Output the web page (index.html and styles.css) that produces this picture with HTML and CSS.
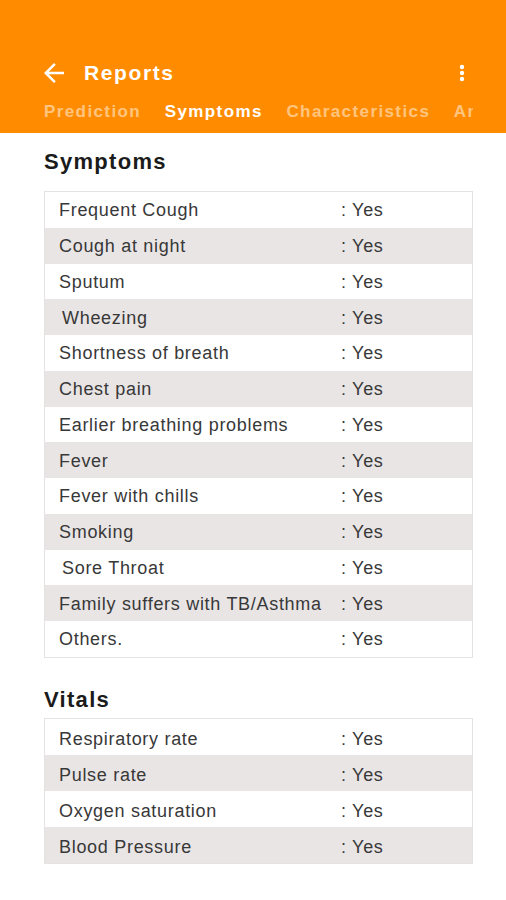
FILE: index.html
```html
<!DOCTYPE html>
<html lang="en">
<head>
<meta charset="utf-8">
<title>Reports</title>
<link rel="stylesheet" href="styles.css">
</head>
<body>
<header class="appbar">
  <div class="toolbar">
    <span class="back">
      <svg width="30" height="30" viewBox="0 0 24 24"><path fill="#fff" d="M20 11H7.83l5.59-5.59L12 4l-8 8 8 8 1.41-1.41L7.83 13H20v-2z"/></svg>
    </span>
    <span class="title">Reports</span>
    <span class="kebab">
      <svg width="6" height="18" viewBox="0 0 6 18"><circle cx="3" cy="3" r="2.2" fill="#fff"/><circle cx="3" cy="9" r="2.2" fill="#fff"/><circle cx="3" cy="15" r="2.2" fill="#fff"/></svg>
    </span>
  </div>
  <nav class="tabs">
    <span class="tab">Prediction</span>
    <span class="tab active">Symptoms</span>
    <span class="tab">Characteristics</span>
    <span class="tab">Analysis</span>
  </nav>
</header>

<main class="content">
  <h2 class="section-title first">Symptoms</h2>
  <div class="table symptoms">
    <div class="row"><span class="label">Frequent Cough</span><span class="value">: Yes</span></div>
    <div class="row alt"><span class="label">Cough at night</span><span class="value">: Yes</span></div>
    <div class="row"><span class="label">Sputum</span><span class="value">: Yes</span></div>
    <div class="row alt"><span class="label indent">Wheezing</span><span class="value">: Yes</span></div>
    <div class="row"><span class="label">Shortness of breath</span><span class="value">: Yes</span></div>
    <div class="row alt"><span class="label">Chest pain</span><span class="value">: Yes</span></div>
    <div class="row"><span class="label">Earlier breathing problems</span><span class="value">: Yes</span></div>
    <div class="row alt"><span class="label">Fever</span><span class="value">: Yes</span></div>
    <div class="row"><span class="label">Fever with chills</span><span class="value">: Yes</span></div>
    <div class="row alt"><span class="label">Smoking</span><span class="value">: Yes</span></div>
    <div class="row"><span class="label indent">Sore Throat</span><span class="value">: Yes</span></div>
    <div class="row alt"><span class="label">Family suffers with TB/Asthma</span><span class="value">: Yes</span></div>
    <div class="row"><span class="label">Others.</span><span class="value">: Yes</span></div>
  </div>

  <h2 class="section-title second">Vitals</h2>
  <div class="table vitals">
    <div class="row"><span class="label">Respiratory rate</span><span class="value">: Yes</span></div>
    <div class="row alt"><span class="label">Pulse rate</span><span class="value">: Yes</span></div>
    <div class="row"><span class="label">Oxygen saturation</span><span class="value">: Yes</span></div>
    <div class="row alt"><span class="label">Blood Pressure</span><span class="value">: Yes</span></div>
  </div>
</main>
</body>
</html>
```

FILE: styles.css
```css
* { box-sizing: border-box; }

body {
  margin: 0;
  background: #ffffff;
  font-family: "Liberation Sans", Arial, sans-serif;
}

.appbar {
  background: #ff8c00;
  height: 133px;
  padding-top: 55px;
}

.toolbar {
  display: flex;
  align-items: center;
  height: 36px;
  padding: 0 41px 0 39px;
}

.back {
  display: flex;
  width: 30px;
  height: 30px;
  margin-right: 15px;
}

.title {
  flex: 1;
  color: #ffffff;
  font-size: 21px;
  font-weight: bold;
  letter-spacing: 1.6px;
}

.kebab {
  display: flex;
}

.tabs {
  display: flex;
  align-items: center;
  gap: 23.6px;
  height: 42px;
  margin-left: 44px;
  width: 429px;
  overflow: hidden;
  white-space: nowrap;
}

.tab {
  flex: none;
  color: rgba(255, 255, 255, 0.5);
  font-size: 17px;
  font-weight: bold;
  letter-spacing: 1.4px;
}

.tab.active {
  color: #ffffff;
}

.content {
  padding: 0 33px 40px 44px;
}

.section-title {
  margin: 0;
  color: #1b1b1b;
  font-size: 22px;
  font-weight: bold;
  line-height: 24px;
  letter-spacing: 1.3px;
}

.section-title.first {
  margin-top: 17px;
  margin-bottom: 17px;
}

.section-title.second {
  margin-top: 30px;
  margin-bottom: 6px;
}

.table {
  border: 1px solid #e3e3e3;
}

.row {
  display: grid;
  grid-template-columns: 296px 1fr;
  align-items: center;
  height: 35.75px;
  background: #ffffff;
  color: #383838;
  font-size: 18px;
  letter-spacing: 0.7px;
}

.vitals .row {
  height: 36px;
}

.row.alt {
  background: #e9e5e5;
}

.label {
  padding-left: 14px;
  padding-top: 2px;
}

.vitals .label,
.vitals .value {
  padding-top: 5px;
}

.label.indent {
  padding-left: 17px;
}

.value {
  padding-top: 2px;
}
```
